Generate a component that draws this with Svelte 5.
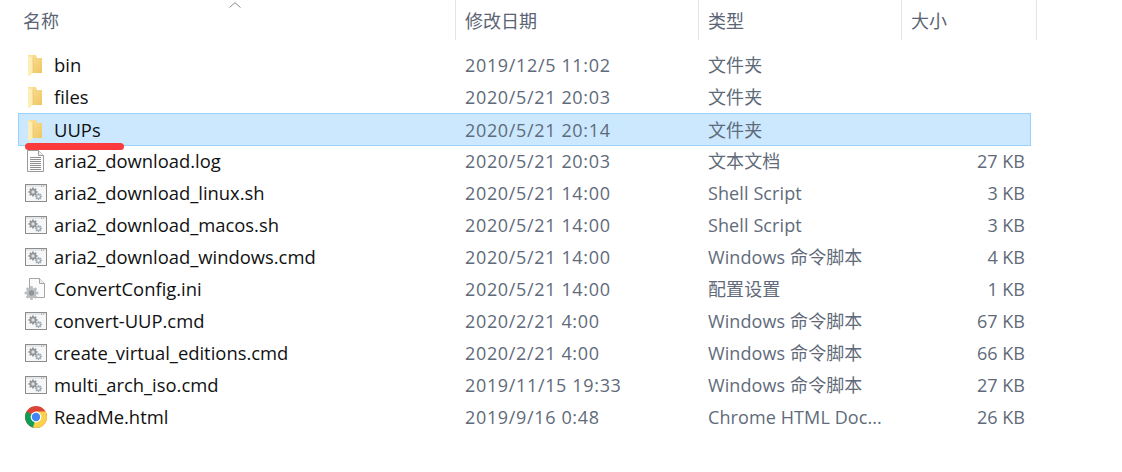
<script>
  const files = [
    { name: 'bin', date: '2019/12/5 11:02', type: '文件夹', size: '', icon: 'folder' },
    { name: 'files', date: '2020/5/21 20:03', type: '文件夹', size: '', icon: 'folder' },
    { name: 'UUPs', date: '2020/5/21 20:14', type: '文件夹', size: '', icon: 'folder', selected: true },
    { name: 'aria2_download.log', date: '2020/5/21 20:03', type: '文本文档', size: '27 KB', icon: 'text' },
    { name: 'aria2_download_linux.sh', date: '2020/5/21 14:00', type: 'Shell Script', size: '3 KB', icon: 'script' },
    { name: 'aria2_download_macos.sh', date: '2020/5/21 14:00', type: 'Shell Script', size: '3 KB', icon: 'script' },
    { name: 'aria2_download_windows.cmd', date: '2020/5/21 14:00', type: 'Windows 命令脚本', size: '4 KB', icon: 'script' },
    { name: 'ConvertConfig.ini', date: '2020/5/21 14:00', type: '配置设置', size: '1 KB', icon: 'config' },
    { name: 'convert-UUP.cmd', date: '2020/2/21 4:00', type: 'Windows 命令脚本', size: '67 KB', icon: 'script' },
    { name: 'create_virtual_editions.cmd', date: '2020/2/21 4:00', type: 'Windows 命令脚本', size: '66 KB', icon: 'script' },
    { name: 'multi_arch_iso.cmd', date: '2019/11/15 19:33', type: 'Windows 命令脚本', size: '27 KB', icon: 'script' },
    { name: 'ReadMe.html', date: '2019/9/16 0:48', type: 'Chrome HTML Doc...', size: '26 KB', icon: 'chrome' }
  ];

  // toothed ring outline, outer radius r
  function gearPath(cx, cy, r, teeth = 8) {
    const pts = [];
    const step = (Math.PI * 2) / teeth;
    for (let i = 0; i < teeth; i += 1) {
      const a = i * step;
      [[-0.3, r * 0.72], [-0.16, r], [0.16, r], [0.3, r * 0.72]].forEach(([t, rad]) => {
        const ang = a + t * step * 1.3;
        pts.push(`${(cx + Math.cos(ang) * rad).toFixed(2)} ${(cy + Math.sin(ang) * rad).toFixed(2)}`);
      });
    }
    return `M${pts.join(' L')} Z`;
  }
</script>

{#snippet gear(cx, cy, r, fill, hole)}
  <path d={gearPath(cx, cy, r)} {fill} />
  <circle {cx} {cy} r={r * 0.38} fill={hole} />
{/snippet}

{#snippet fileIcon(kind)}
  <svg class="icon" width="24" height="24" viewBox="0 0 24 24">
    {#if kind === 'folder'}
      <defs>
        <linearGradient id="folder-back" x1="0" y1="0" x2="1" y2="1">
          <stop offset="0" stop-color="#fae29a" />
          <stop offset="1" stop-color="#f0c661" />
        </linearGradient>
      </defs>
      <path d="M5 2 H13 L14 5 H19 V20 H5 Z" fill="url(#folder-back)" />
      <path d="M5 2.5 L10 4.5 V20 L6.5 23 L5 22.5 Z" fill="#fdeeb5" />
      <path d="M10 4.5 V20" stroke="#e6c267" stroke-width="0.7" />
    {:else if kind === 'text'}
      <path d="M4.5 1.5 H15.5 L20.5 6.5 V22.5 H4.5 Z" fill="#fdfdfd" stroke="#9a9a9a" />
      <path d="M15.5 1.5 V6.5 H20.5" fill="#eee" stroke="#9a9a9a" />
      <path d="M7 8.5 H18 M7 10.5 H18 M7 12.5 H18 M7 14.5 H18 M7 16.5 H18 M7 18.5 H18 M7 20.5 H18" stroke="#8f8f8f" stroke-width="1" />
    {:else if kind === 'script'}
      <rect x="2.5" y="3.5" width="21" height="17" fill="#f7f7f7" stroke="#8c8c8c" />
      <path d="M3 4 H23 V6 H3 Z" fill="#e6e6e6" />
      <path d="M18 5 H19 M20 5 H21" stroke="#9a9a9a" />
      {@render gear(10, 11, 4.6, '#8d949a', '#d8dde0')}
      {@render gear(15.5, 15.5, 3.6, '#a3adb5', '#eef1f3')}
    {:else if kind === 'config'}
      <path d="M6.5 1.5 H16.5 L21.5 6.5 V20.5 H6.5 Z" fill="#fbfbfb" stroke="#a5a5a5" />
      <path d="M16.5 1.5 V6.5 H21.5" fill="#eee" stroke="#a5a5a5" />
      {@render gear(8.5, 16, 7, '#b9bfc2', '#8f9598')}
    {:else}
      <circle cx="13" cy="12" r="11" fill="#db4437" />
      <path d="M13 12 L18.5 21.5 A11 11 0 0 1 3.5 6.5 Z" fill="#0f9d58" />
      <path d="M13 12 L24 12 A11 11 0 0 1 13 23 L10 22.5 Z" fill="#fcd14a" />
      <path d="M13 6.5 H23 L24 12 H13 Z" fill="#fcd14a" />
      <circle cx="13" cy="12" r="5.4" fill="#fff" />
      <circle cx="13" cy="12" r="4.2" fill="#4285f4" />
    {/if}
  </svg>
{/snippet}

<main class="explorer">
  <header class="head">
    <div class="col col-name">
      名称
      <svg class="caret" width="12" height="6" viewBox="0 0 12 6">
        <path d="M0.5 5.5 L6 0.7 L11.5 5.5" fill="none" stroke="#8a8a8a" />
      </svg>
    </div>
    <div class="col col-date">修改日期</div>
    <div class="col col-type">类型</div>
    <div class="col col-size">大小</div>
  </header>

  <ul class="list">
    {#each files as file}
      <li class="row" class:selected={file.selected}>
        <span class="icon-cell">{@render fileIcon(file.icon)}</span>
        <span class="name">{file.name}</span>
        <span class="meta date">{file.date}</span>
        <span class="meta type">{file.type}</span>
        <span class="meta size">{file.size}</span>
        {#if file.selected}<span class="underline"></span>{/if}
      </li>
    {/each}
  </ul>
</main>

<style>
  :global(body) {
    margin: 0;
    background: #fff;
  }

  .explorer {
    width: 1122px;
    height: 472px;
    overflow: hidden;
    font-family: "Open Sans", "Noto Sans CJK SC", sans-serif;
    font-size: 18px;
  }

  .head {
    display: flex;
    height: 40px;
    color: #5a6474;
    font-family: "Noto Sans CJK SC", sans-serif;
    font-size: 18px;
  }

  .col {
    box-sizing: border-box;
    position: relative;
    line-height: 40px;
    padding-left: 9px;
    border-right: 1px solid #e5e5e5;
  }

  .col-name {
    width: 456px;
    padding-left: 23px;
  }

  .col-date {
    width: 243px;
  }

  .col-type {
    width: 203px;
  }

  .col-size {
    width: 135px;
  }

  .caret {
    position: absolute;
    left: 229px;
    top: 2px;
  }

  .list {
    list-style: none;
    margin: 9px 0 0 18px;
    padding: 0;
    width: 1013px;
  }

  .row {
    position: relative;
    box-sizing: border-box;
    display: grid;
    grid-template-columns: 36px 411px 243px 203px 114px;
    height: 32px;
    align-items: center;
    white-space: nowrap;
    line-height: 32px;
  }

  .row.selected {
    background: #cce8ff;
    outline: 1px solid #99d1ff;
    outline-offset: -1px;
    height: 33px;
    margin-bottom: -1px;
  }

  .icon-cell {
    display: flex;
    padding-left: 5px;
  }

  .name {
    color: #111;
    font-size: 18.4px;
  }

  .meta {
    color: #5f6b7a;
  }

  .date {
    letter-spacing: 0.65px;
  }

  .type {
    letter-spacing: 0.1px;
  }

  .size {
    text-align: right;
  }

  .underline {
    position: absolute;
    left: 7px;
    top: 30px;
    width: 99px;
    height: 7px;
    border-radius: 3.5px;
    background: #fb3a3e;
  }
</style>
